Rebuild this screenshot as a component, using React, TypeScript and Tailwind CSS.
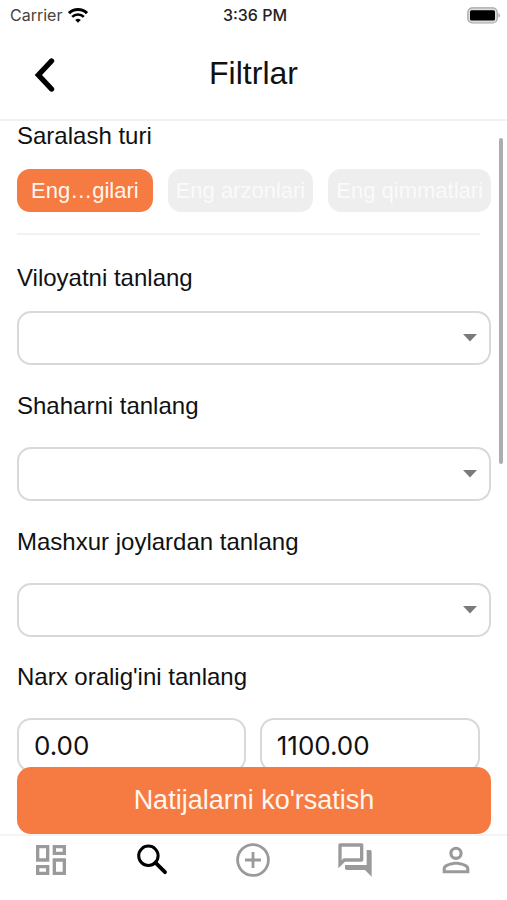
import { useState } from "react";
import {
  MdOutlineDashboard,
  MdOutlineForum,
  MdPersonOutline,
} from "react-icons/md";

const sortTypes = [
  { id: "new", label: "Eng…gilari", padding: "px-[14px]" },
  { id: "cheap", label: "Eng arzonlari", padding: "px-2" },
  { id: "expensive", label: "Eng qimmatlari", padding: "px-2" },
];

function SearchIcon({ size }: { size: number }) {
  return (
    <svg width={size} height={size} viewBox="0 0 40 40" fill="none" stroke="currentColor">
      <circle cx="16.4" cy="15.8" r="9.7" strokeWidth="3" />
      <path d="M23.4 22.6 33 32.2" strokeWidth="3.8" strokeLinecap="round" />
    </svg>
  );
}

function AddIcon({ size }: { size: number }) {
  return (
    <svg width={size} height={size} viewBox="0 0 40 40" fill="none" stroke="currentColor">
      <circle cx="20" cy="20" r="15.4" strokeWidth="2.8" />
      <path d="M20 12v16M12 20h16" strokeWidth="2.8" />
    </svg>
  );
}

const tabs = [
  { id: "home", label: "Bosh sahifa", Icon: MdOutlineDashboard },
  { id: "search", label: "Qidiruv", Icon: SearchIcon },
  { id: "add", label: "Qo'shish", Icon: AddIcon },
  { id: "chat", label: "Xabarlar", Icon: MdOutlineForum },
  { id: "profile", label: "Profil", Icon: MdPersonOutline },
];

function StatusBar() {
  return (
    <div className="grid h-[30px] grid-cols-3 items-center pl-[10px] pr-[7px] font-[Inter,sans-serif] text-[16px] text-[#222]">
      <div className="flex items-center gap-[6px]">
        <span className="text-[#444]">Carrier</span>
        <svg width="20" height="15" viewBox="0 0 20 15" fill="none" stroke="#000">
          <path d="M1 5.2a12.8 12.8 0 0 1 18 0" strokeWidth="3" />
          <path d="M4.2 8.9a8.2 8.2 0 0 1 11.6 0" strokeWidth="2.6" />
          <path d="M10 14.8 7.2 12.1a4 4 0 0 1 5.6 0z" fill="#000" stroke="none" />
        </svg>
      </div>
      <span className="text-center font-medium">3:36 PM</span>
      <svg className="justify-self-end" width="33" height="17" viewBox="0 0 33 17">
        <rect x="0.8" y="0.8" width="29.4" height="15.2" rx="4.5" fill="#ddd" stroke="#a6a6a6" strokeWidth="1.2" />
        <rect x="3" y="3.2" width="25" height="10.4" rx="1.5" fill="#000" />
        <path d="M31.4 6.2c2 .7 2 3.7 0 4.4z" fill="#a6a6a6" />
      </svg>
    </div>
  );
}

function Header() {
  return (
    <header className="grid h-[91px] grid-cols-[56px_1fr_56px] items-center border-b-2 border-[#f0f0f0] pb-1">
      <button type="button" aria-label="Orqaga" className="flex justify-end pt-1">
        <svg width="24" height="36" viewBox="0 0 24 36" fill="none" stroke="#000" strokeWidth="5.4" strokeLinecap="round">
          <path d="M19.5 4 6.4 18l13.1 14" />
        </svg>
      </button>
      <h1 className="text-center text-[32px] leading-[36px]">Filtrlar</h1>
    </header>
  );
}

function SelectField({ id, label, gap }: { id: string; label: string; gap: string }) {
  return (
    <div className={`flex flex-col ${gap}`}>
      <label htmlFor={id} className="text-[24px] leading-[30px]">
        {label}
      </label>
      <div className="relative">
        <select
          id={id}
          className="h-[54px] w-full appearance-none rounded-[14px] border-2 border-[#d9d9d9] bg-white px-4 text-[24px]"
        >
          <option value=""></option>
        </select>
        <svg
          className="pointer-events-none absolute right-[14px] top-[23px]"
          width="14"
          height="8"
          viewBox="0 0 14 8"
          fill="#7a7a7a"
        >
          <path d="M0 0h14L7 7.6z" />
        </svg>
      </div>
    </div>
  );
}

export default function App() {
  const [sort, setSort] = useState("new");
  const [from, setFrom] = useState("0.00");
  const [to, setTo] = useState("1100.00");
  const [tab, setTab] = useState("search");

  return (
    <div className="flex h-screen flex-col overflow-hidden bg-white font-['Liberation_Sans',Arial,sans-serif] text-[#111]">
      <StatusBar />
      <Header />

      <div className="relative min-h-0 flex-1">
        <main className="h-full overflow-y-auto pb-20 pl-[17px] pr-4 [scrollbar-width:none]">
          <h2 className="text-[24px] leading-[30px]">Saralash turi</h2>
          <div className="mt-[18px] flex justify-between">
            {sortTypes.map((item) => (
              <button
                key={item.id}
                type="button"
                aria-pressed={sort === item.id}
                onClick={() => setSort(item.id)}
                className={`h-[43px] rounded-[13px] whitespace-nowrap text-[22px] ${item.padding} ${
                  sort === item.id ? "bg-[#f57b42] text-[#fff6ee]" : "bg-[#eee] text-[#fafafa]"
                }`}
              >
                {item.label}
              </button>
            ))}
          </div>
          <hr className="mr-[11px] mt-[21px] border-t-2 border-[#f2f2f2]" />

          {/* Location */}
          <div className="mt-7 flex flex-col gap-[26px]">
            <SelectField id="region" label="Viloyatni tanlang" gap="gap-[18px]" />
            <SelectField id="city" label="Shaharni tanlang" gap="gap-[26px]" />
            <SelectField id="place" label="Mashxur joylardan tanlang" gap="gap-[26px]" />
          </div>

          {/* Price range */}
          <fieldset className="mt-[25px]">
            <legend className="text-[24px] leading-[30px]">Narx oralig'ini tanlang</legend>
            <div className="mr-[11px] mt-[26px] flex gap-[14px] font-[Inter,sans-serif] text-[26px]">
              <input
                aria-label="Eng kam narx"
                inputMode="decimal"
                value={from}
                onChange={(e) => setFrom(e.target.value)}
                className="h-[54px] w-0 grow-[23] rounded-[14px] border-2 border-[#d9d9d9] px-[15px]"
              />
              <input
                aria-label="Eng yuqori narx"
                inputMode="decimal"
                value={to}
                onChange={(e) => setTo(e.target.value)}
                className="h-[54px] w-0 grow-[22] rounded-[14px] border-2 border-[#d9d9d9] px-[15px]"
              />
            </div>
          </fieldset>
        </main>

        {/* Scroll indicator */}
        <div className="absolute right-1 top-[17px] h-[326px] w-1 rounded-full bg-[#adadad]" />

        <button
          type="button"
          className="absolute bottom-0 left-[17px] right-4 h-[67px] rounded-[14px] bg-[#f57b42] text-[27px] text-[#fff6ee]"
        >
          Natijalarni ko'rsatish
        </button>
      </div>

      <nav className="grid h-[66px] grid-cols-5 border-t-2 border-[#f4f4f4]">
        {tabs.map(({ id, label, Icon }) => (
          <button
            key={id}
            type="button"
            aria-label={label}
            onClick={() => setTab(id)}
            className={`flex justify-center pt-1 ${tab === id ? "text-black" : "text-[#9a9a9a]"}`}
          >
            <Icon size={40} />
          </button>
        ))}
      </nav>
    </div>
  );
}
